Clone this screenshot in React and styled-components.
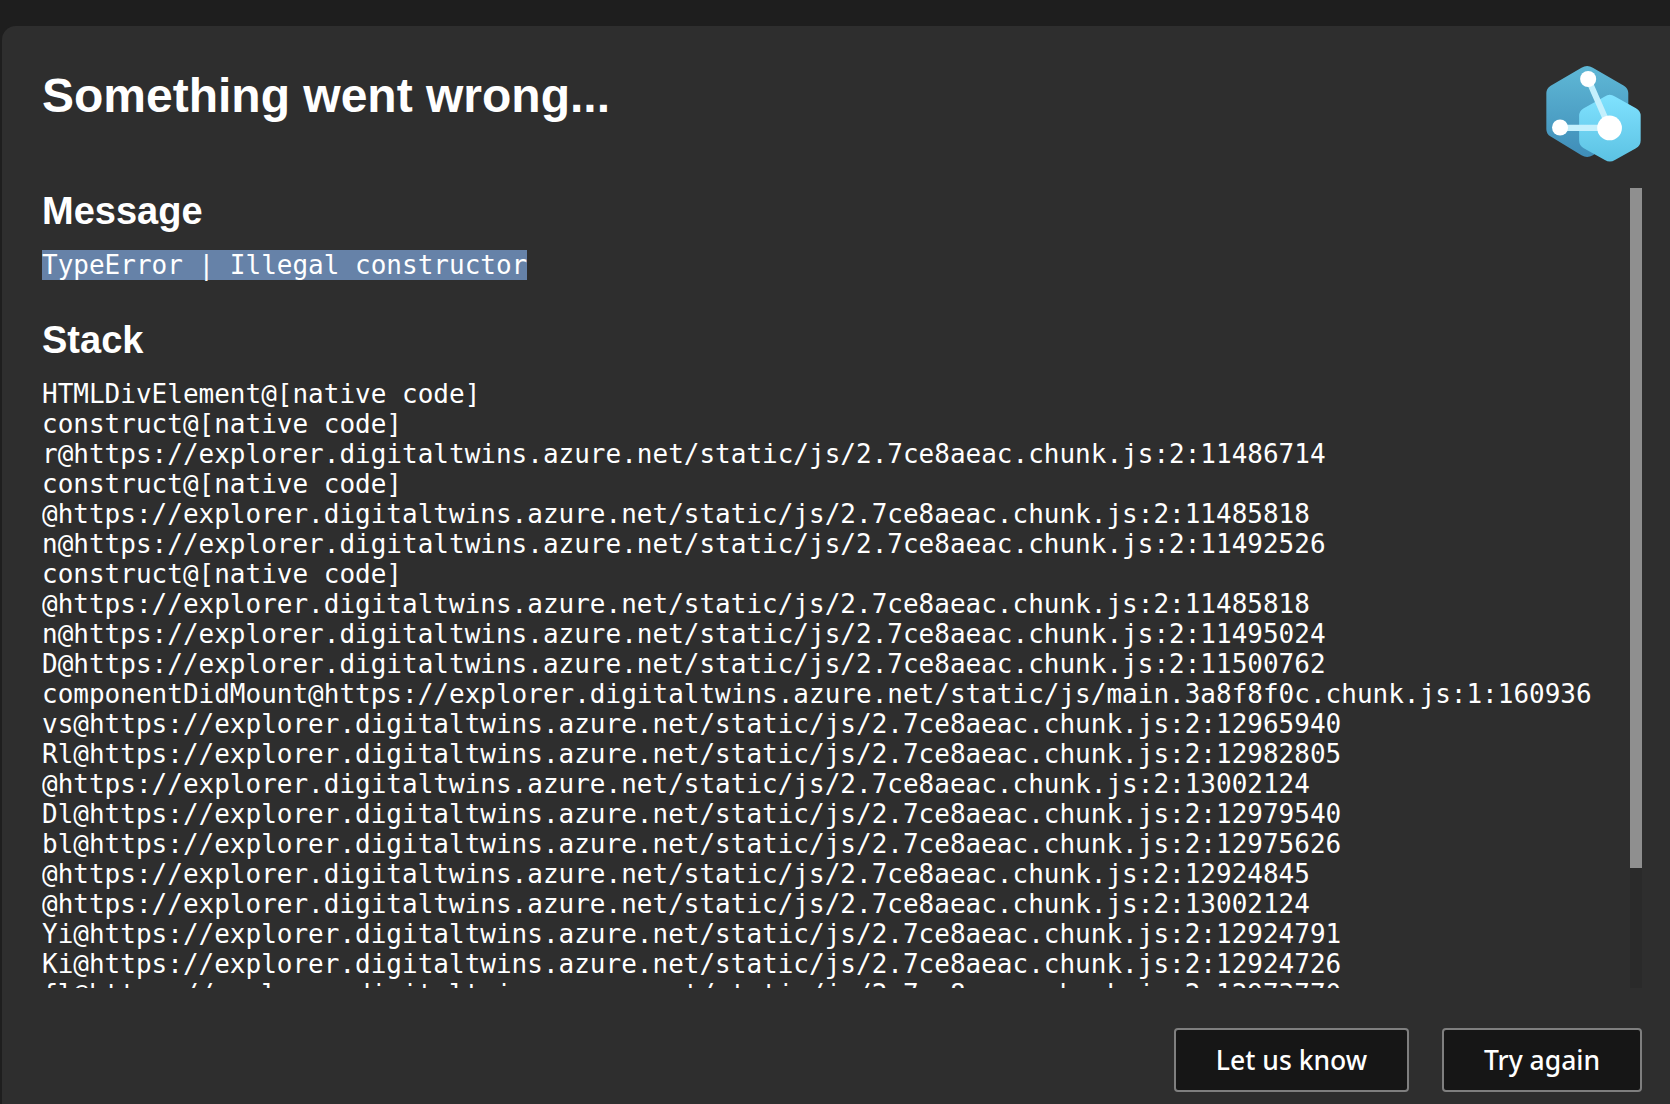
import React from 'react';
import styled, { createGlobalStyle } from 'styled-components';

const stackLines = [
  'HTMLDivElement@[native code]',
  'construct@[native code]',
  'r@https://explorer.digitaltwins.azure.net/static/js/2.7ce8aeac.chunk.js:2:11486714',
  'construct@[native code]',
  '@https://explorer.digitaltwins.azure.net/static/js/2.7ce8aeac.chunk.js:2:11485818',
  'n@https://explorer.digitaltwins.azure.net/static/js/2.7ce8aeac.chunk.js:2:11492526',
  'construct@[native code]',
  '@https://explorer.digitaltwins.azure.net/static/js/2.7ce8aeac.chunk.js:2:11485818',
  'n@https://explorer.digitaltwins.azure.net/static/js/2.7ce8aeac.chunk.js:2:11495024',
  'D@https://explorer.digitaltwins.azure.net/static/js/2.7ce8aeac.chunk.js:2:11500762',
  'componentDidMount@https://explorer.digitaltwins.azure.net/static/js/main.3a8f8f0c.chunk.js:1:160936',
  'vs@https://explorer.digitaltwins.azure.net/static/js/2.7ce8aeac.chunk.js:2:12965940',
  'Rl@https://explorer.digitaltwins.azure.net/static/js/2.7ce8aeac.chunk.js:2:12982805',
  '@https://explorer.digitaltwins.azure.net/static/js/2.7ce8aeac.chunk.js:2:13002124',
  'Dl@https://explorer.digitaltwins.azure.net/static/js/2.7ce8aeac.chunk.js:2:12979540',
  'bl@https://explorer.digitaltwins.azure.net/static/js/2.7ce8aeac.chunk.js:2:12975626',
  '@https://explorer.digitaltwins.azure.net/static/js/2.7ce8aeac.chunk.js:2:12924845',
  '@https://explorer.digitaltwins.azure.net/static/js/2.7ce8aeac.chunk.js:2:13002124',
  'Yi@https://explorer.digitaltwins.azure.net/static/js/2.7ce8aeac.chunk.js:2:12924791',
  'Ki@https://explorer.digitaltwins.azure.net/static/js/2.7ce8aeac.chunk.js:2:12924726',
  'fl@https://explorer.digitaltwins.azure.net/static/js/2.7ce8aeac.chunk.js:2:12973770',
];

const GlobalStyle = createGlobalStyle`
  html, body {
    margin: 0;
    height: 100%;
    background: #1e1e1e;
    overflow: hidden;
  }
`;

const Page = styled.div`
  height: 1104px;
  padding: 26px 0 0 2px;
  box-sizing: border-box;
`;

const Panel = styled.div`
  height: 100%;
  background: #2e2e2e;
  border-radius: 14px 0 0 0;
  display: flex;
  flex-direction: column;
  padding: 0 28px 0 40px;
  color: #fff;
`;

const Header = styled.header`
  height: 162px;
  display: flex;
  justify-content: space-between;
  align-items: flex-start;
`;

const Title = styled.h1`
  margin: 42px 0 0;
  font: bold 48px/56px "Liberation Sans", Arial, sans-serif;
`;

const Logo = styled.svg`
  margin-top: 37px;
  width: 97px;
  height: 101px;
`;

const ScrollRow = styled.div`
  height: 800px;
  flex: none;
  display: flex;
`;

const ScrollArea = styled.div`
  flex: 1;
  overflow: hidden;
  padding-top: 1px;
`;

const Track = styled.div`
  width: 12px;
  background: #2a2a2a;
`;

const Thumb = styled.div`
  height: 680px;
  background: #8f8f8f;
`;

const Section = styled.section`
  padding-bottom: ${(p) => p.$bottom || 0}px;
`;

const Heading = styled.h2`
  margin: 0 0 17px;
  font: bold 38px/44px "Liberation Sans", Arial, sans-serif;
`;

const Code = styled.pre`
  margin: 0;
  font: 26px/30px "DejaVu Sans Mono", monospace;
  color: #fff;
`;

const Selected = styled.span`
  background: #6682a8;
`;

const Footer = styled.footer`
  flex: 1;
  display: flex;
  justify-content: flex-end;
  align-items: flex-start;
  gap: 33px;
  padding-top: 40px;
`;

const Button = styled.button`
  width: ${(p) => p.$width}px;
  height: 64px;
  background: #161616;
  border: 2px solid #7f7f7f;
  border-radius: 4px;
  color: #fff;
  font: 500 26.5px "Noto Sans", sans-serif;
  padding: 0;
`;

function AppLogo() {
  return (
    <Logo viewBox="136 72 290 298">
      <defs>
        <linearGradient id="backHex" x1="0" y1="0" x2="0" y2="1">
          <stop offset="0" stopColor="#5fb8d6" />
          <stop offset="1" stopColor="#3f8db8" />
        </linearGradient>
        <linearGradient id="frontHex" x1="0" y1="0" x2="0" y2="1">
          <stop offset="0" stopColor="#80e2ff" />
          <stop offset="1" stopColor="#5cc2e3" />
        </linearGradient>
      </defs>
      <path
        fill="url(#backHex)"
        d="M245 84Q262 74 279 84L372 138Q385 146 385 160L385 268Q385 282 372 290L279 346Q262 356 245 346L153 290Q140 282 140 268L140 160Q140 146 153 138Z"
      />
      <path
        fill="url(#frontHex)"
        d="M315 170Q329 160 345 170L408 205Q422 213 422 228L422 302Q422 317 408 325L345 360Q330 369 315 360L252 325Q238 317 238 302L238 228Q238 213 252 205Z"
      />
      <path stroke="#c4f0fd" strokeWidth="18" fill="none" d="M265 118L329 264L181 264" />
      <circle cx="265" cy="118" r="24" fill="#fff" />
      <circle cx="181" cy="263" r="24" fill="#fff" />
      <circle cx="329" cy="264" r="37" fill="#fff" />
    </Logo>
  );
}

export default function App() {
  return (
    <Page>
      <GlobalStyle />
      <Panel>
        <Header>
          <Title>Something went wrong...</Title>
          <AppLogo />
        </Header>
        <ScrollRow>
          <ScrollArea>
            <Section $bottom={38}>
              <Heading>Message</Heading>
              <Code>
                <Selected>TypeError | Illegal constructor</Selected>
              </Code>
            </Section>
            <Section>
              <Heading>Stack</Heading>
              <Code>{stackLines.join('\n')}</Code>
            </Section>
          </ScrollArea>
          <Track>
            <Thumb />
          </Track>
        </ScrollRow>
        <Footer>
          <Button $width={235}>Let us know</Button>
          <Button $width={200}>Try again</Button>
        </Footer>
      </Panel>
    </Page>
  );
}
